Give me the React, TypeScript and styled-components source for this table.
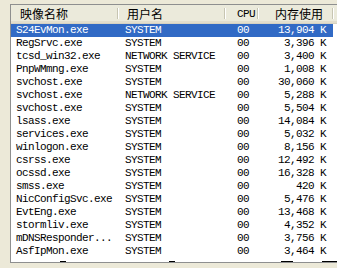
import styled, { createGlobalStyle } from "styled-components";

type procRecord = {
    name: string;
    user: string;
    cpu: string;
    mem: string;
}

const processes: procRecord[] = [
    { name: "S24EvMon.exe", user: "SYSTEM", cpu: "00", mem: "13,904 K" },
    { name: "RegSrvc.exe", user: "SYSTEM", cpu: "00", mem: "3,396 K" },
    { name: "tcsd_win32.exe", user: "NETWORK SERVICE", cpu: "00", mem: "3,400 K" },
    { name: "PnpWMmng.exe", user: "SYSTEM", cpu: "00", mem: "1,008 K" },
    { name: "svchost.exe", user: "SYSTEM", cpu: "00", mem: "30,060 K" },
    { name: "svchost.exe", user: "NETWORK SERVICE", cpu: "00", mem: "5,288 K" },
    { name: "svchost.exe", user: "SYSTEM", cpu: "00", mem: "5,504 K" },
    { name: "lsass.exe", user: "SYSTEM", cpu: "00", mem: "14,084 K" },
    { name: "services.exe", user: "SYSTEM", cpu: "00", mem: "5,032 K" },
    { name: "winlogon.exe", user: "SYSTEM", cpu: "00", mem: "8,156 K" },
    { name: "csrss.exe", user: "SYSTEM", cpu: "00", mem: "12,492 K" },
    { name: "ocssd.exe", user: "SYSTEM", cpu: "00", mem: "16,328 K" },
    { name: "smss.exe", user: "SYSTEM", cpu: "00", mem: "420 K" },
    { name: "NicConfigSvc.exe", user: "SYSTEM", cpu: "00", mem: "5,476 K" },
    { name: "EvtEng.exe", user: "SYSTEM", cpu: "00", mem: "13,468 K" },
    { name: "stormliv.exe", user: "SYSTEM", cpu: "00", mem: "4,352 K" },
    { name: "mDNSResponder...", user: "SYSTEM", cpu: "00", mem: "3,756 K" },
    { name: "AsfIpMon.exe", user: "SYSTEM", cpu: "00", mem: "3,464 K" },
];

const TaskList = () => {
    return (
        <Page>
            <ListBox>
                <HeaderRow>
                    <HeadCell $pad="0 0 0 9px">映像名称</HeadCell>
                    <HeadCell $pad="0 0 0 9px">用户名</HeadCell>
                    <HeadCell $pad="0 0 0 12px" $mono>CPU</HeadCell>
                    <HeadCell $pad="0 10px 0 0" $right>内存使用</HeadCell>
                    <HeadFiller />
                </HeaderRow>
                <Rows>
                    {processes.map((p, index) => (
                        <Row key={index} $selected={index === 0}>
                            <Cell $pad="0 0 0 5px">{p.name}</Cell>
                            <Cell $pad="0 0 0 7px">{p.user}</Cell>
                            <Cell $pad="0 0 0 12px">{p.cpu}</Cell>
                            <Cell $pad="0 7px 0 0" $right>{p.mem}</Cell>
                        </Row>
                    ))}
                    {/* next row is scrolled mostly out of view, only its top edge shows */}
                    <PeekRow>
                        <PeekMark style={{ width: 6, marginLeft: 49 }} />
                        <PeekMark style={{ width: 6, marginLeft: 103 }} />
                        <PeekMark style={{ width: 12, marginLeft: 106 }} />
                        <PeekMark style={{ width: 24, marginLeft: 29 }} />
                    </PeekRow>
                </Rows>
            </ListBox>
        </Page>
    );
}

export default TaskList;

const GlobalStyle = createGlobalStyle`
    html, body {
        margin: 0;
        padding: 0;
        background: #ece9d8;
        overflow: hidden;
    }
`

const Page = (props: { children: React.ReactNode }) => (
    <>
        <GlobalStyle />
        <Wrap>{props.children}</Wrap>
    </>
)

const Wrap = styled.div`
    width: 337px;
    height: 268px;
    padding: 4px 0 0 10px;
    box-sizing: border-box;
    overflow: hidden;
    background: #ece9d8;
`

const ListBox = styled.div`
    width: 345px;
    height: 259px;
    box-sizing: border-box;
    border: 1px solid #8e8f8f;
    border-right: none;
    background: #fff;
    overflow: hidden;
    display: flex;
    flex-direction: column;
`

const COLS = "107px 107px 33px 75px";

const HeaderRow = styled.div`
    display: grid;
    grid-template-columns: ${COLS} 1fr;
    height: 19px;
    flex-shrink: 0;
    background: #ebeadb;
    border-bottom: 1px solid #d6d2c2;
    box-shadow: inset 0 -2px 0 #e2decd;
    box-sizing: border-box;
`

const HeadCell = styled.div<{ $pad: string; $right?: boolean; $mono?: boolean }>`
    position: relative;
    padding: ${(p) => p.$pad};
    display: flex;
    align-items: center;
    justify-content: ${(p) => (p.$right ? "flex-end" : "flex-start")};
    font-family: ${(p) => (p.$mono ? '"Liberation Mono", monospace' : '"Noto Sans CJK SC", sans-serif')};
    font-size: ${(p) => (p.$mono ? "11px" : "12px")};
    letter-spacing: ${(p) => (p.$mono ? "-0.6px" : "0")};
    color: #000;
    line-height: 1;

    &::after {
        content: "";
        position: absolute;
        right: 0;
        top: 3px;
        bottom: 4px;
        width: 1px;
        background: #c7c5b2;
        box-shadow: 1px 0 0 #fff;
    }
`

const HeadFiller = styled.div``

const Rows = styled.div`
    display: flex;
    flex-direction: column;
`

const Row = styled.div<{ $selected?: boolean }>`
    display: grid;
    grid-template-columns: ${COLS};
    height: 13px;
    flex-shrink: 0;
    background: ${(p) => (p.$selected ? "#316ac5" : "transparent")};
    color: ${(p) => (p.$selected ? "#fff" : "#000")};
    width: 322px;
`

const Cell = styled.div<{ $pad: string; $right?: boolean }>`
    padding: ${(p) => p.$pad};
    display: flex;
    align-items: center;
    justify-content: ${(p) => (p.$right ? "flex-end" : "flex-start")};
    font-family: "Liberation Mono", monospace;
    font-size: 11px;
    letter-spacing: -0.6px;
    line-height: 13px;
    white-space: nowrap;
    overflow: hidden;
`

const PeekRow = styled.div`
    display: flex;
    align-items: flex-end;
    height: 4px;
    flex-shrink: 0;
`

const PeekMark = styled.div`
    height: 1px;
    background: #000;
    flex-shrink: 0;
`
